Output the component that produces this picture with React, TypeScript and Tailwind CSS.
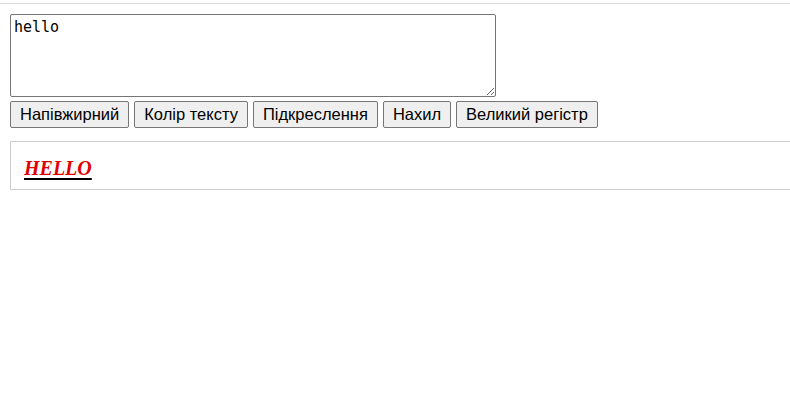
export default function App() {
  const buttons = ["Напівжирний", "Колір тексту", "Підкреслення", "Нахил", "Великий регістр"];
  return (
    <div className="min-h-[418px] w-[790px] overflow-hidden bg-white">
      <div className="mt-[3px] h-px w-full bg-[#dcdcdc]" />
      <div className="px-[10px] pt-[10px]">
        <textarea
          defaultValue="hello"
          className="block h-[83px] w-[486px] resize rounded-[2px] border border-[#767676] px-[3px] py-[3px] font-['DejaVu_Sans_Mono',monospace] text-[15px] leading-[18px] text-black outline-none"
        />
        <div className="mt-[4px] flex gap-[5px]">
          {buttons.map((b) => (
            <button
              key={b}
              className="h-[27px] rounded-[2px] border border-[#767676] bg-[#efefef] px-[9px] font-['Liberation_Sans',Arial,sans-serif] text-[16.5px] leading-none text-black"
            >
              {b}
            </button>
          ))}
        </div>
        <div className="mt-[13px] flex h-[49px] w-[820px] items-center border border-[#cccccc] px-[13px] pt-[4px]">
          <span className="font-['Liberation_Serif','Times_New_Roman',serif] text-[20px] font-bold italic text-black underline decoration-2 underline-offset-[3px]">
            <span className="text-[#e00000]">HELLO</span>
          </span>
        </div>
      </div>
    </div>
  );
}
